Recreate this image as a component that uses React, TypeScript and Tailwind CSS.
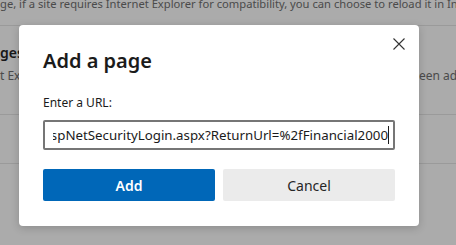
import React from "react";

const font = { fontFamily: '"Noto Sans", "Open Sans", Arial, sans-serif' };

function Cut({ before, after, className }: { before: string; after: string; className?: string }) {
  return (
    <div className={"flex whitespace-nowrap " + (className ?? "")}>
      <div className="w-0 shrink-0 flex justify-end">
        <span>{before}</span>
      </div>
      <span>{after}</span>
    </div>
  );
}

export default function App() {
  return (
    <div className="relative w-[456px] h-[245px] overflow-hidden bg-white" style={font}>
      {/* background settings page */}
      <div className="flex flex-col">
        <div className="h-[26px] border-b border-[#e6e6e6] overflow-hidden">
          <Cut
            className="text-[11.2px] leading-[14px] text-[#707070] -mt-[3px]"
            before="While browsing in Microsoft Ed"
            after="ge, if a site requires Internet Explorer for compatibility, you can choose to reload it in Internet Explorer mode"
          />
        </div>
        <div className="h-[89px] border-b border-[#e6e6e6] pt-[17px]">
          <Cut
            className="text-[14px] leading-[20px] font-semibold text-[#262626]"
            before="Internet Explorer mode pa"
            after="ges"
          />
          <div className="flex whitespace-nowrap text-[12px] leading-[18px] text-[#707070] mt-[4px]">
            <div className="w-[419px] shrink-0 overflow-hidden">
              <Cut before="These pages will open in Interne" after="t Explorer mode for 30 days from the date you add the page. No pages have b" />
            </div>
            <span className="shrink-0">een added to the Internet Explorer mode list yet.</span>
          </div>
        </div>
        <div className="h-[49px] border-b border-[#e6e6e6]" />
      </div>

      {/* overlay */}
      <div className="absolute inset-0 bg-black/[0.33]" />

      {/* dialog */}
      <div className="absolute left-[19px] top-[25px] w-[400px] h-[201px] bg-white rounded-[4px] shadow-[0_2px_8px_rgba(0,0,0,0.18)] flex flex-col px-[24px] pt-[22px]">
        <button className="absolute right-[14px] top-[13px] w-[12px] h-[12px] flex items-center justify-center">
          <svg width="12" height="12" viewBox="0 0 12 12">
            <path d="M0.5 0.5 L11.5 11.5 M11.5 0.5 L0.5 11.5" stroke="#333" strokeWidth="1.1" fill="none" />
          </svg>
        </button>
        <div className="text-[20px] leading-[28px] font-semibold text-[#1b1b1b]">Add a page</div>
        <div className="mt-[20px] text-[12px] leading-[16px] text-[#1b1b1b]">Enter a URL:</div>
        <div className="mt-[9px] h-[30px] border-2 border-[#767676] rounded-[2px] flex items-center pl-[8px] pr-[4px]">
          <div className="flex-1 overflow-hidden flex justify-end whitespace-nowrap text-[13.3px] leading-[20px] text-[#1b1b1b]">
            <span>http://contoso.com/AspNetSecurityLogin.aspx?ReturnUrl=%2fFinancial2000</span>
            <span className="inline-block shrink-0 w-[1px] h-[18px] bg-[#1b1b1b] mt-[1px]" />
          </div>
        </div>
        <div className="mt-[19px] flex gap-[8px]">
          <button className="w-[172px] h-[32px] rounded-[2px] bg-[#0067b8] text-white text-[14px] font-semibold">Add</button>
          <button className="w-[172px] h-[32px] rounded-[2px] bg-[#ebebeb] text-[#262626] text-[14px]">Cancel</button>
        </div>
      </div>
    </div>
  );
}
